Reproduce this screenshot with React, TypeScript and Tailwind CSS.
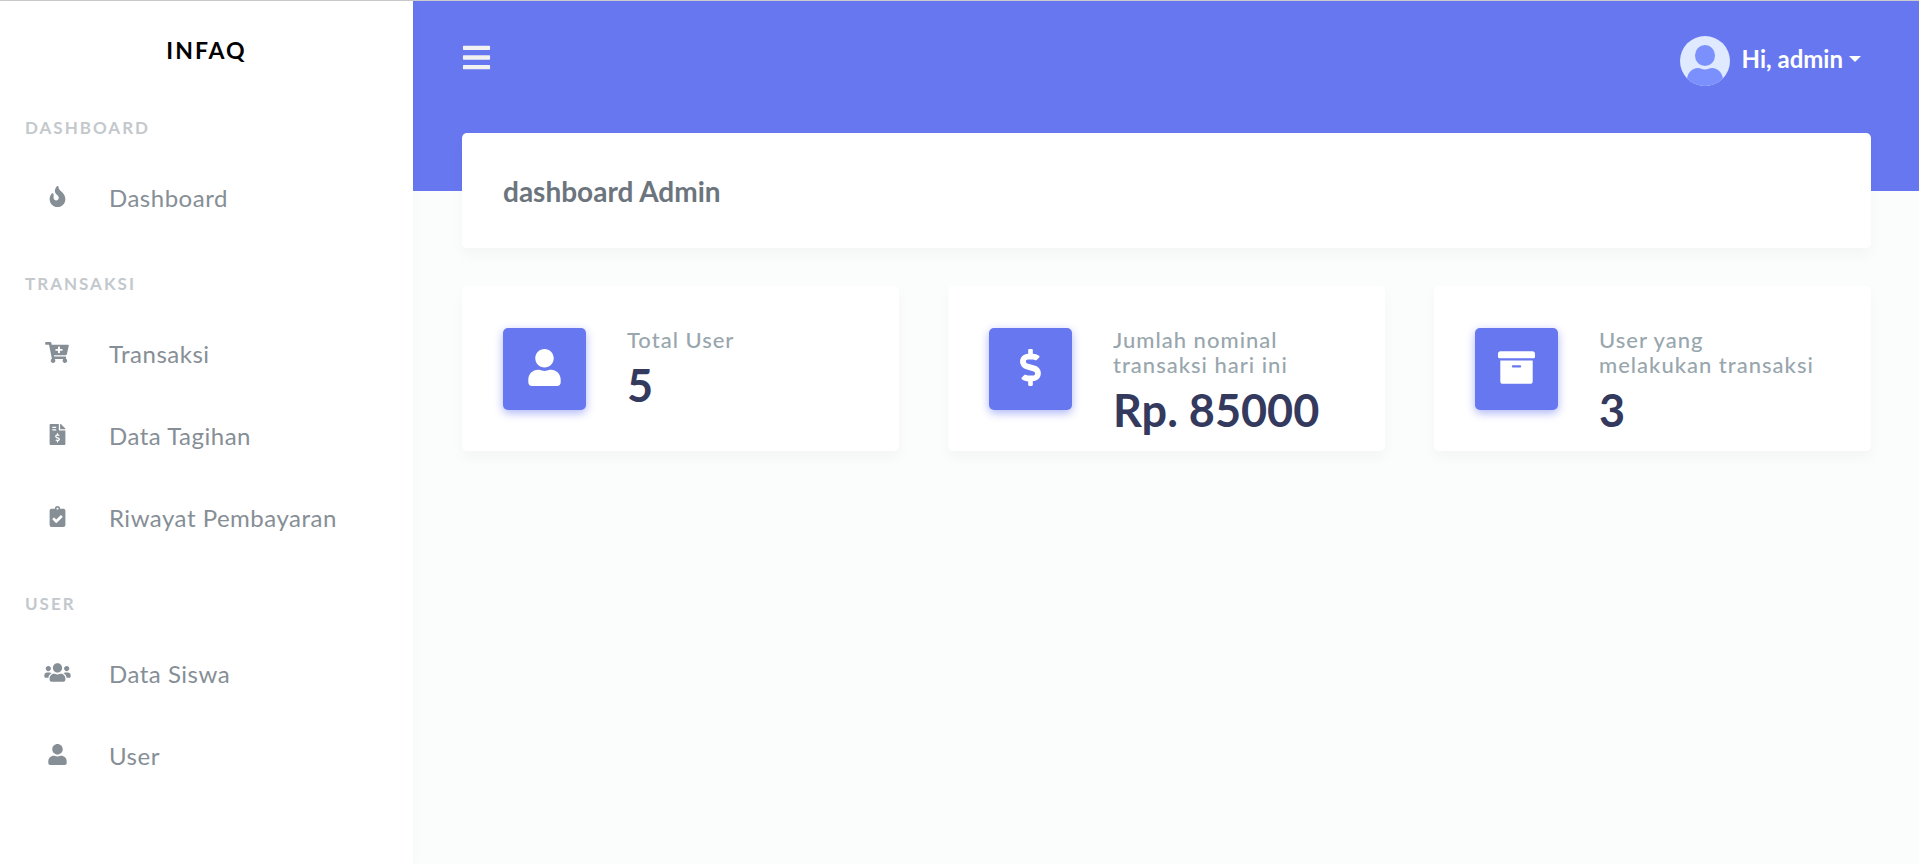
import type { ReactNode } from "react";
import type { IconType } from "react-icons";
import {
  FaArchive,
  FaBars,
  FaCartPlus,
  FaClipboardCheck,
  FaDollarSign,
  FaFileInvoiceDollar,
  FaFire,
  FaUser,
  FaUsers,
} from "react-icons/fa";

type MenuItem = { label: string; icon: IconType; iconSize?: string };
type MenuSection = { title: string; items: MenuItem[] };

const sections: MenuSection[] = [
  { title: "Dashboard", items: [{ label: "Dashboard", icon: FaFire }] },
  {
    title: "Transaksi",
    items: [
      { label: "Transaksi", icon: FaCartPlus, iconSize: "h-[21px] w-6" },
      { label: "Data Tagihan", icon: FaFileInvoiceDollar },
      { label: "Riwayat Pembayaran", icon: FaClipboardCheck },
    ],
  },
  {
    title: "User",
    items: [
      { label: "Data Siswa", icon: FaUsers, iconSize: "h-[21px] w-[27px]" },
      { label: "User", icon: FaUser },
    ],
  },
];

function Sidebar() {
  return (
    <aside className="z-10 w-[413px] shrink-0 bg-white shadow-[0_0_13px_rgba(0,0,0,0.03)]">
      <div className="flex h-[98px] items-center justify-center">
        <a href="#" className="text-[23px] font-bold uppercase tracking-[2px] text-black">
          Infaq
        </a>
      </div>
      <nav className="flex flex-col gap-4">
        {sections.map((section) => (
          <section key={section.title}>
            <h2 className="flex h-[58px] items-center px-[25px] text-[17px] font-bold uppercase tracking-[2px] text-[#c3c8cd]">
              {section.title}
            </h2>
            <ul>
              {section.items.map(({ label, icon: Icon, iconSize = "size-[21px]" }) => (
                <li key={label}>
                  <a href="#" className="flex h-[82px] items-center gap-[27px] px-8 text-[#868e96]">
                    <span className="flex w-[50px] justify-center pb-[3px]">
                      <Icon className={iconSize} />
                    </span>
                    <span className="text-2xl tracking-[0.5px]">{label}</span>
                  </a>
                </li>
              ))}
            </ul>
          </section>
        ))}
      </nav>
    </aside>
  );
}

function Avatar() {
  return (
    <svg viewBox="0 0 50 50" className="size-[50px]" aria-hidden="true">
      <clipPath id="avatar-circle">
        <circle cx="25" cy="25" r="25" />
      </clipPath>
      <g clipPath="url(#avatar-circle)">
        <rect width="50" height="50" fill="#dfe9ff" />
        <ellipse cx="25" cy="19.5" rx="10" ry="10.5" fill="#7b90fc" />
        <path
          d="M7 44C7 37 12 32 18 32C20.500 32 22 33.500 25 33.500S29.500 32 32 32C38 32 43 37 43 44V50H7Z"
          fill="#7b90fc"
        />
      </g>
    </svg>
  );
}

function StatCard({ icon: Icon, label, value }: { icon: IconType; label: ReactNode; value: string }) {
  return (
    <article className="flex min-h-[165px] gap-[41px] rounded-[5px] bg-white px-[41px] pt-[41px] pb-2 shadow-[0_7px_13px_rgba(0,0,0,0.03)]">
      <div className="mt-px flex h-[82px] w-[83px] shrink-0 items-center justify-center rounded-[5px] bg-[#6777ef] shadow-[0_3px_10px_#acb5f6]">
        <Icon className="mb-1 size-[37px] text-white" />
      </div>
      <div>
        <h3 className="text-[22px] leading-[25px] font-medium tracking-[1px] whitespace-nowrap text-[#98a6ad]">
          {label}
        </h3>
        <p className="mt-2 text-[45px] leading-[50px] font-bold text-[#34395e]">{value}</p>
      </div>
    </article>
  );
}

export default function App() {
  return (
    <div className="flex min-h-screen border-t border-[#cccccc] bg-[#fafdfb] font-['Lato',sans-serif]">
      <Sidebar />
      <div className="min-w-0 flex-1">
        <header className="flex h-[190px] items-start justify-between bg-[#6777ef] pr-12 pl-12">
          <button type="button" aria-label="Toggle sidebar" className="mt-[41px] text-[#f2f2f2]">
            <FaBars className="size-[31px]" />
          </button>
          <button type="button" className="mt-[35px] mr-[10px] flex items-center text-white">
            <Avatar />
            <span className="ml-3 pb-1 text-2xl font-bold">Hi, admin</span>
            <span className="mb-1 ml-[6px] border-x-[6px] border-t-[6px] border-x-transparent border-t-white" />
          </button>
        </header>
        <main className="-mt-[58px] flex flex-col gap-[38px] pr-12 pl-[49px]">
          <div className="flex h-[115px] items-center rounded-[5px] bg-white px-[41px] shadow-[0_7px_13px_rgba(0,0,0,0.03)]">
            <h1 className="text-[28px] font-bold text-[#6c757d]">dashboard Admin</h1>
          </div>
          <div className="grid grid-cols-3 gap-[49px]">
            <StatCard icon={FaUser} label="Total User" value="5" />
            <StatCard
              icon={FaDollarSign}
              label={<>Jumlah nominal<br />transaksi hari ini</>}
              value="Rp. 85000"
            />
            <StatCard
              icon={FaArchive}
              label={<>User yang<br />melakukan transaksi</>}
              value="3"
            />
          </div>
        </main>
      </div>
    </div>
  );
}
